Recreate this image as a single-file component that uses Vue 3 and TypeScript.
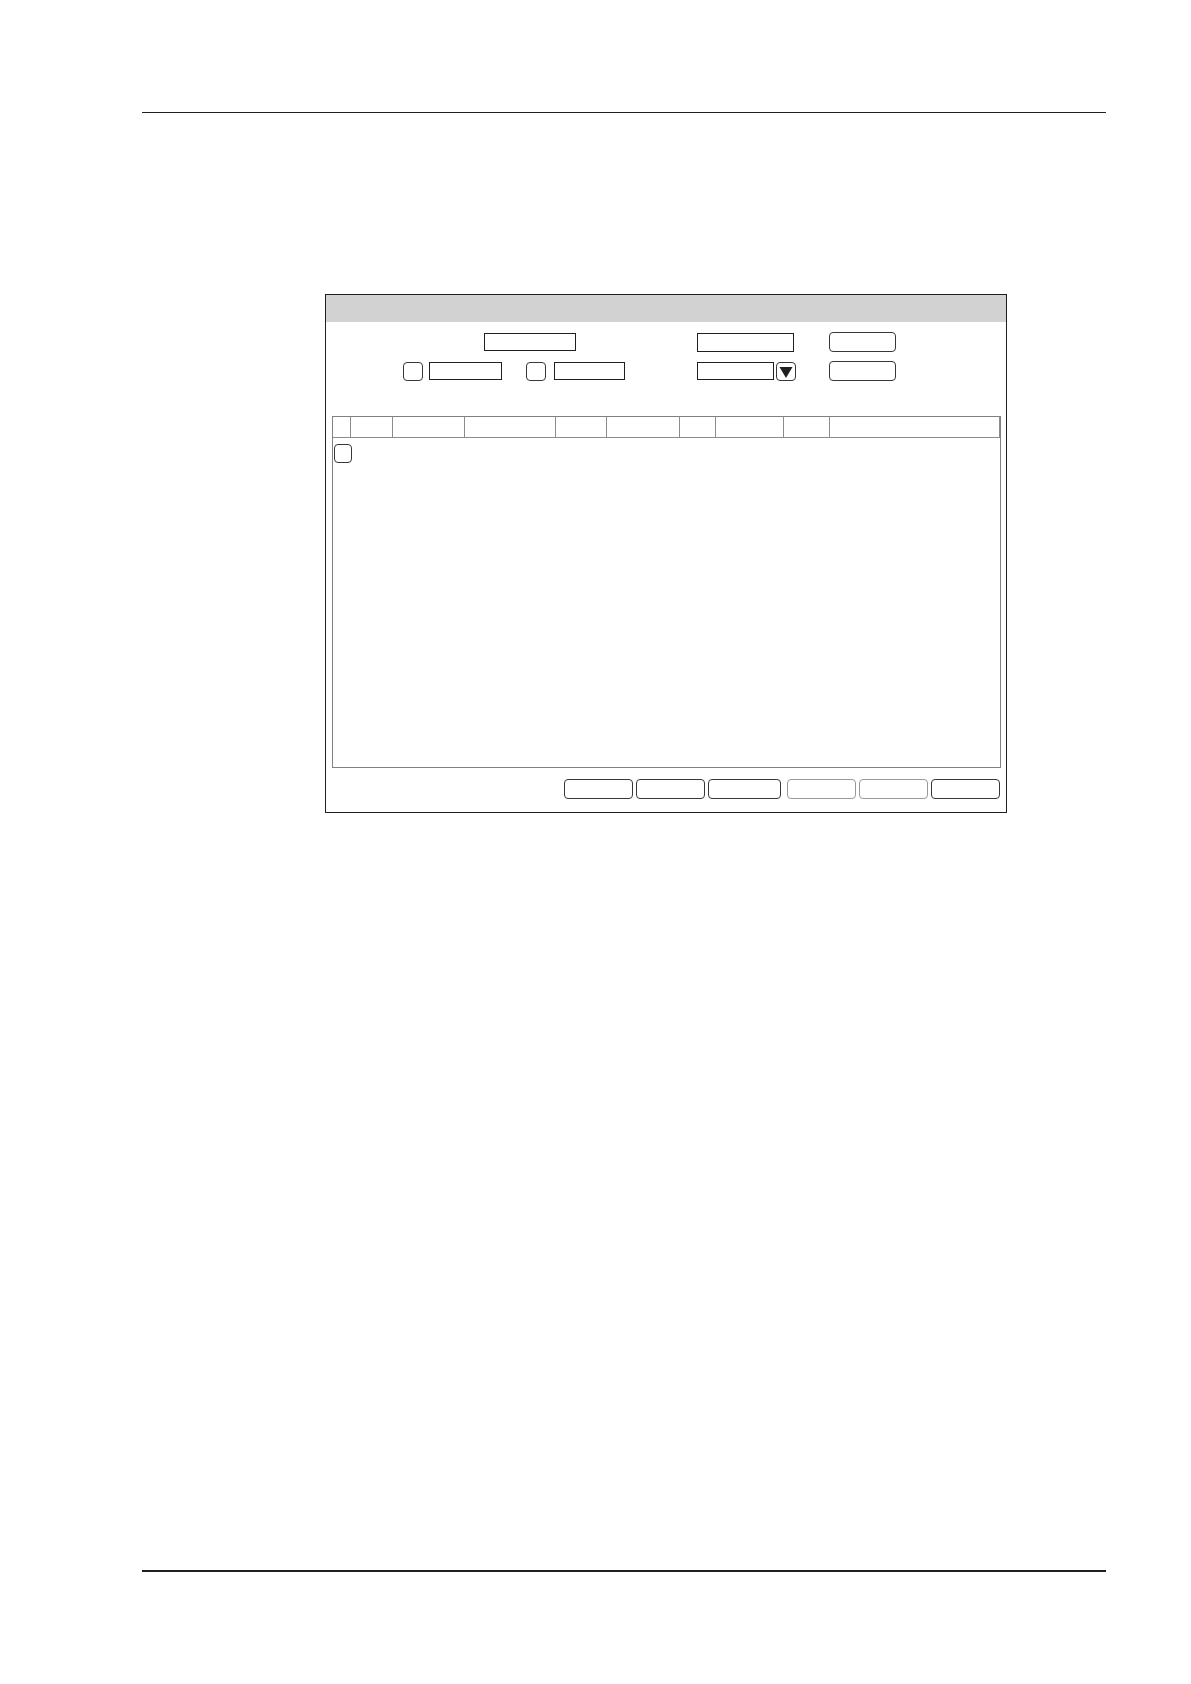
<script setup lang="ts">
import { ref } from 'vue'

interface Column {
  name: string
  width?: number
}

interface Action {
  name: string
  wide?: boolean
  disabled?: boolean
}

const columns: Column[] = [
  { name: 'Select', width: 18 },
  { name: 'Column 1', width: 42 },
  { name: 'Column 2', width: 72 },
  { name: 'Column 3', width: 91 },
  { name: 'Column 4', width: 51 },
  { name: 'Column 5', width: 73 },
  { name: 'Column 6', width: 36 },
  { name: 'Column 7', width: 68 },
  { name: 'Column 8', width: 46 },
  { name: 'Column 9' },
]

const actionGroups: Action[][] = [
  [{ name: 'Action 1' }, { name: 'Action 2' }, { name: 'Action 3', wide: true }],
  [{ name: 'Action 4', disabled: true }, { name: 'Action 5', disabled: true }, { name: 'Action 6' }],
]

const keyword = ref('')
const reference = ref('')
const fromEnabled = ref(false)
const from = ref('')
const toEnabled = ref(false)
const to = ref('')
const category = ref('')
const rowSelected = ref(false)
const categorySelect = ref<HTMLSelectElement | null>(null)

function openCategories(): void {
  categorySelect.value?.showPicker?.()
}
</script>

<template>
  <div class="page">
    <header class="page-head"></header>

    <main class="content">
      <section class="panel" aria-label="Records">
        <div class="title-bar"></div>

        <form class="filters" @submit.prevent>
          <div class="fields first">
            <input v-model="keyword" class="box keyword" type="text" aria-label="Keyword" />
          </div>
          <div class="fields">
            <input v-model="reference" class="box reference" type="text" aria-label="Reference" />
          </div>
          <button class="btn filter-btn" type="submit" aria-label="Search"></button>

          <div class="fields dates">
            <input v-model="fromEnabled" class="check" type="checkbox" aria-label="Use start date" />
            <input v-model="from" class="box from" type="text" aria-label="Start date" />
            <input v-model="toEnabled" class="check second" type="checkbox" aria-label="Use end date" />
            <input v-model="to" class="box to" type="text" aria-label="End date" />
          </div>
          <div class="fields picker">
            <select ref="categorySelect" v-model="category" class="box category" aria-label="Category">
              <option value=""></option>
            </select>
            <button class="btn arrow" type="button" aria-label="Open categories" @click="openCategories">
              <svg width="14" height="11" viewBox="0 0 14 11" aria-hidden="true">
                <path d="M0.5 0H13.5L7 11Z" fill="#231f20" />
              </svg>
            </button>
          </div>
          <button class="btn filter-btn" type="reset" aria-label="Reset"></button>
        </form>

        <div class="list">
          <table>
            <colgroup>
              <col
                v-for="c in columns"
                :key="c.name"
                :style="c.width ? { width: c.width + 'px' } : undefined"
              />
            </colgroup>
            <thead>
              <tr>
                <th v-for="c in columns" :key="c.name" scope="col" :aria-label="c.name"></th>
              </tr>
            </thead>
            <tbody>
              <tr>
                <td><input v-model="rowSelected" class="check row-check" type="checkbox" aria-label="Select row" /></td>
                <td v-for="c in columns.slice(1)" :key="c.name"></td>
              </tr>
            </tbody>
          </table>
        </div>

        <div class="actions">
          <div v-for="(group, g) in actionGroups" :key="g" class="group">
            <button
              v-for="a in group"
              :key="a.name"
              class="btn action"
              :class="{ wide: a.wide }"
              type="button"
              :disabled="a.disabled"
              :aria-label="a.name"
            ></button>
          </div>
        </div>
      </section>
    </main>

    <footer class="page-foot"></footer>
  </div>
</template>

<style>
body {
  margin: 0;
  background: #fff;
}
</style>

<style scoped>
.page,
.page * {
  box-sizing: border-box;
}

.page {
  display: flex;
  flex-direction: column;
  min-height: 100vh;
  padding: 0 85px 0 142px;
  font: 12px/16px "Liberation Sans", Arial, sans-serif;
  color: #231f20;
}

.page-head {
  height: 113px;
  border-bottom: 1px solid #231f20;
}

.content {
  flex: 1;
  padding: 181px 99px 40px 183px;
}

.page-foot {
  height: 114px;
  border-top: 2px solid #231f20;
}

.panel {
  border: 1px solid #231f20;
}

.title-bar {
  height: 27px;
  background: #d2d2d2;
}

.filters {
  display: grid;
  grid-template-columns: 371px 132px 67px;
  grid-auto-rows: 20px;
  row-gap: 9px;
  padding: 10px 0 35px;
}

.fields {
  display: flex;
  align-items: flex-start;
  padding-top: 1px;
}

.first {
  padding-left: 158px;
}

.dates {
  gap: 6px;
  padding-left: 77px;
}

.picker {
  gap: 2px;
}

.box {
  height: 18px;
  margin: 0;
  padding: 0 4px;
  border: 1px solid #231f20;
  border-radius: 0;
  background: #fff;
  color: inherit;
  font: inherit;
  appearance: none;
}

.keyword {
  width: 92px;
}

.reference {
  width: 97px;
  height: 19px;
}

.from {
  width: 73px;
}

.to {
  width: 71px;
  margin-left: 2px;
}

.category {
  width: 77px;
}

.check {
  flex: none;
  width: 20px;
  height: 19px;
  margin: 0;
  border: 1px solid #3a3637;
  border-radius: 4px;
  background: #fff;
  appearance: none;
}

.check:checked {
  background: #231f20;
  box-shadow: inset 0 0 0 4px #fff;
}

.second {
  margin-left: 18px;
}

.btn {
  display: flex;
  align-items: center;
  justify-content: center;
  height: 20px;
  margin: 0;
  padding: 0;
  border: 1px solid #3a3637;
  border-radius: 4px;
  background: #fff;
  color: inherit;
  font: inherit;
}

.btn:disabled {
  border-color: #999;
}

.arrow {
  width: 20px;
  height: 19px;
  padding-top: 2px;
}

.arrow svg {
  flex: none;
}

.list {
  min-height: 352px;
  margin: 0 5px 0 6px;
  border: 1px solid #808080;
}

table {
  width: 100%;
  table-layout: fixed;
  border-collapse: separate;
  border-spacing: 0;
}

th {
  height: 21px;
  padding: 0;
  border-right: 1px solid #8c8c8c;
  border-bottom: 1px solid #8c8c8c;
}

td {
  padding: 6px 0 0 1px;
}

.row-check {
  display: block;
  width: 18px;
}

.actions {
  display: flex;
  justify-content: flex-end;
  gap: 6px;
  padding: 11px 6px 13px;
}

.group {
  display: flex;
  gap: 3px;
}

.action {
  width: 69px;
}

.wide {
  width: 73px;
}
</style>
